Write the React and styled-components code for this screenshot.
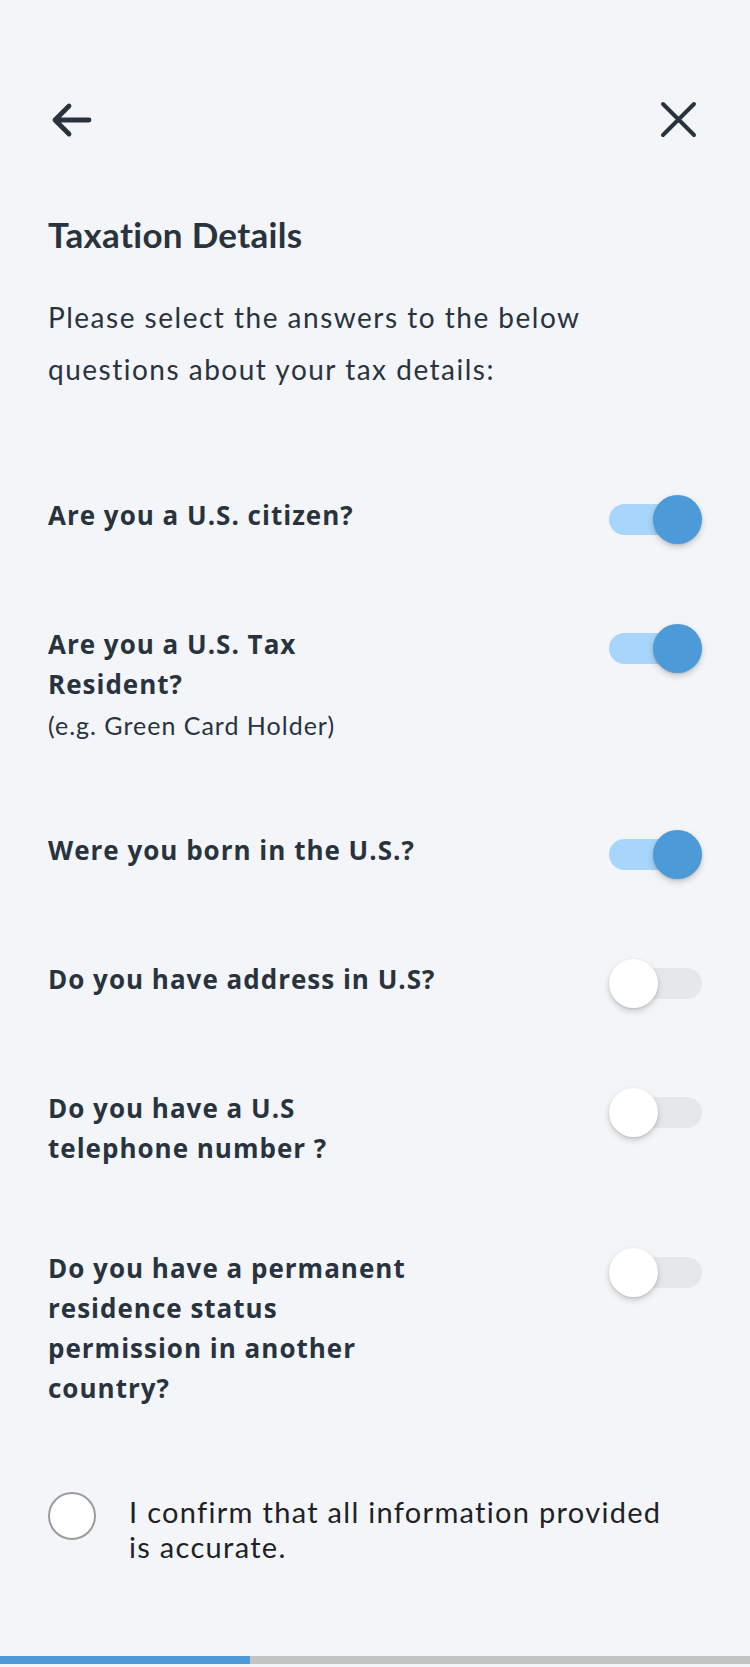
import React, { useState } from "react";
import styled, { createGlobalStyle } from "styled-components";

const GlobalStyle = createGlobalStyle`
  html, body {
    margin: 0;
    padding: 0;
    background: #f3f5f9;
  }
  body {
    font-family: Lato, "Open Sans", sans-serif;
    color: #28333e;
  }
`;

const Page = styled.div`
  min-height: 1667px;
  display: flex;
  flex-direction: column;
  background: #f3f5f9;
`;

const Header = styled.div`
  display: flex;
  justify-content: space-between;
  align-items: center;
  padding: 98px 50px 0 48px;
  height: 44px;
`;

const IconButton = styled.button`
  width: 44px;
  height: 44px;
  padding: 0;
  border: none;
  background: none;
  display: flex;
  align-items: center;
  justify-content: center;
  cursor: pointer;
  color: #28333e;
`;

const Content = styled.div`
  padding: 0 48px 0 48px;
  flex: 1;
`;

const Title = styled.h1`
  margin: 72px 0 0;
  font-size: 35px;
  line-height: 40px;
  font-weight: 700;
  letter-spacing: 0.3px;
`;

const Intro = styled.p`
  margin: 37px 0 0;
  font-size: 28px;
  line-height: 52px;
  font-weight: 400;
  letter-spacing: 1.5px;
  max-width: 560px;
`;

const Questions = styled.div`
  margin-top: 100px;
  display: flex;
  flex-direction: column;
  gap: 80px;
`;

const Row = styled.div`
  display: flex;
  justify-content: space-between;
  align-items: flex-start;
`;

const QText = styled.div`
  max-width: 500px;
`;

const Question = styled.div`
  font-family: "Open Sans", Lato, sans-serif;
  font-size: 26px;
  line-height: 40px;
  font-weight: 700;
  letter-spacing: 1px;
`;

const Hint = styled.div`
  font-size: 25px;
  line-height: 42px;
  letter-spacing: 1px;
  margin-bottom: 4px;
`;

const Track = styled.button`
  position: relative;
  width: 93px;
  height: 49px;
  padding: 0;
  border: none;
  background: none;
  cursor: pointer;
  flex-shrink: 0;

  &::before {
    content: "";
    position: absolute;
    left: 0;
    right: 0;
    top: 9px;
    height: 31px;
    border-radius: 16px;
    background: ${(p) => (p.$on ? "#a8d5fb" : "#e6e7ea")};
  }
`;

const Knob = styled.span`
  position: absolute;
  top: 0;
  left: ${(p) => (p.$on ? "44px" : "0")};
  width: 49px;
  height: 49px;
  border-radius: 50%;
  background: ${(p) => (p.$on ? "#4d9ad9" : "#ffffff")};
  box-shadow: 0 3px 6px rgba(0, 0, 0, 0.18), 0 1px 2px rgba(0, 0, 0, 0.1);
`;

const Confirm = styled.label`
  margin-top: 84px;
  display: flex;
  align-items: flex-start;
  gap: 33px;
  cursor: pointer;
`;

const Radio = styled.span`
  width: 44px;
  height: 44px;
  flex-shrink: 0;
  border-radius: 50%;
  border: 2px solid #9b9b9b;
  background: #fff;
`;

const ConfirmText = styled.span`
  font-size: 29px;
  line-height: 35px;
  color: #1e2226;
  letter-spacing: 1.3px;
  margin-top: 2px;
`;

const Progress = styled.div`
  display: flex;
  height: 8px;
  margin-bottom: 3px;
  background: #c4c4c4;
`;

const ProgressFill = styled.div`
  background: #4c9ad6;
`;

const questions = [
  { text: ["Are you a U.S. citizen?"], on: true },
  { text: ["Are you a U.S. Tax", "Resident?"], hint: "(e.g. Green Card Holder)", on: true },
  { text: ["Were you born in the U.S.?"], on: true },
  { text: ["Do you have address in U.S?"], on: false },
  { text: ["Do you have a U.S", "telephone number ?"], on: false },
  {
    text: ["Do you have a permanent", "residence status", "permission in another", "country?"],
    on: false,
  },
];

function Toggle({ on, onClick }) {
  return (
    <Track $on={on} onClick={onClick} aria-pressed={on}>
      <Knob $on={on} />
    </Track>
  );
}

export default function App() {
  const [answers, setAnswers] = useState(questions.map((q) => q.on));
  const [confirmed, setConfirmed] = useState(false);

  const flip = (i) => {
    const next = [...answers];
    next[i] = !next[i];
    setAnswers(next);
  };

  return (
    <Page>
      <GlobalStyle />
      <Header>
        <IconButton aria-label="Back">
          <svg width="44" height="44" viewBox="0 0 44 44" fill="none">
            <path
              d="M7 22H41M21 8L7 22L21 36"
              stroke="#28333e"
              strokeWidth="4.8"
              strokeLinecap="round"
              strokeLinejoin="round"
            />
          </svg>
        </IconButton>
        <IconButton aria-label="Close">
          <svg width="44" height="44" viewBox="0 0 44 44" fill="none">
            <path
              d="M7 6L38 37M38 6L7 37"
              stroke="#28333e"
              strokeWidth="4"
              strokeLinecap="round"
            />
          </svg>
        </IconButton>
      </Header>
      <Content>
        <Title>Taxation Details</Title>
        <Intro>
          Please select the answers to the below
          <br />
          questions about your tax details:
        </Intro>
        <Questions>
          {questions.map((q, i) => (
            <Row key={i}>
              <QText>
                {q.text.map((line) => (
                  <Question key={line}>{line}</Question>
                ))}
                {q.hint && <Hint>{q.hint}</Hint>}
              </QText>
              <Toggle on={answers[i]} onClick={() => flip(i)} />
            </Row>
          ))}
        </Questions>
        <Confirm onClick={() => setConfirmed(!confirmed)}>
          <Radio />
          <ConfirmText>
            I confirm that all information provided
            <br />
            is accurate.
          </ConfirmText>
        </Confirm>
      </Content>
      <Progress>
        <ProgressFill style={{ width: "33.33%" }} />
      </Progress>
    </Page>
  );
}
